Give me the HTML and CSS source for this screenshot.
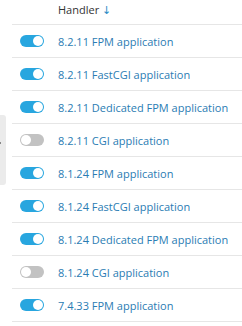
FILE: index.html
```html
<!DOCTYPE html>
<html lang="en">
<head>
  <meta charset="UTF-8">
  <title>PHP handlers</title>
  <link rel="stylesheet" href="styles.css">
</head>
<body>
  <div class="side-tab"><span class="side-mark"></span></div>
  <div class="handlers">
    <div class="head">Handler <span class="sort">↓</span></div>
    <div class="row"><span class="toggle on"></span><a href="#">8.2.11 FPM application</a></div>
    <div class="row"><span class="toggle on"></span><a href="#">8.2.11 FastCGI application</a></div>
    <div class="row"><span class="toggle on"></span><a href="#">8.2.11 Dedicated FPM application</a></div>
    <div class="row"><span class="toggle"></span><a href="#">8.2.11 CGI application</a></div>
    <div class="row"><span class="toggle on"></span><a href="#">8.1.24 FPM application</a></div>
    <div class="row"><span class="toggle on"></span><a href="#">8.1.24 FastCGI application</a></div>
    <div class="row"><span class="toggle on"></span><a href="#">8.1.24 Dedicated FPM application</a></div>
    <div class="row"><span class="toggle"></span><a href="#">8.1.24 CGI application</a></div>
    <div class="row"><span class="toggle on"></span><a href="#">7.4.33 FPM application</a></div>
  </div>
</body>
</html>
```

FILE: styles.css
```css
body { margin: 0; background: #fff; font-family: "Open Sans", Arial, sans-serif; font-size: 11px; overflow: hidden; }
.handlers { margin-left: 12px; }
.head { height: 24px; line-height: 19px; padding-left: 46px; color: #333; border-bottom: 1px solid #e6e6e6; }
.sort { color: #2b8bc6; font-family: "DejaVu Sans", sans-serif; font-size: 11px; }
.row { height: 32px; display: flex; align-items: center; padding-left: 8px; border-bottom: 1px solid #e6e6e6; }
.row a { margin-left: 14px; color: #2a7cb3; text-decoration: none; }
.toggle { position: relative; width: 24px; height: 12px; border-radius: 6px; background: #c2c2c2; }
.toggle::after { content: ""; position: absolute; left: 1px; top: 1px; width: 10px; height: 10px; border-radius: 50%; background: #fff; }
.toggle.on { background: #28a6df; }
.toggle.on::after { left: 13px; }
.side-tab { position: absolute; left: 0; top: 115px; width: 6px; height: 70px; background: #ebebeb; border-radius: 0 3px 3px 0; }
.side-mark { position: absolute; left: 0; top: 27px; width: 1px; height: 2px; background: #888; }
```
